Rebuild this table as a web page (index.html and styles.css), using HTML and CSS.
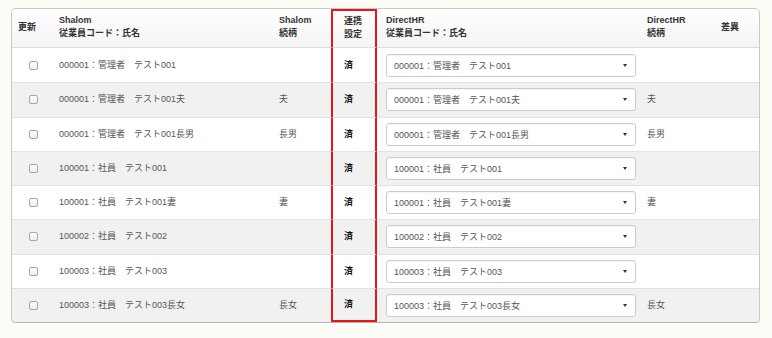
FILE: index.html
```html
<!DOCTYPE html>
<html lang="ja">

<head>
    <meta charset="UTF-8" />
    <meta name="viewport" content="width=device-width, initial-scale=1.0" />
    <title>従業員連携</title>
    <link rel="stylesheet" href="styles.css">
</head>

<body>
    <div class="panel">
        <table class="link-table">
            <thead>
                <tr>
                    <th class="col-check">更新</th>
                    <th class="col-name">Shalom<br>従業員コード：氏名</th>
                    <th class="col-rel">Shalom<br>続柄</th>
                    <th class="col-status">連携<br>設定</th>
                    <th class="col-select">DirectHR<br>従業員コード：氏名</th>
                    <th class="col-rel2">DirectHR<br>続柄</th>
                    <th class="col-diff">差異</th>
                </tr>
            </thead>
            <tbody>
                <tr>
                    <td class="col-check"><input type="checkbox"></td>
                    <td>000001：管理者　テスト001</td>
                    <td></td>
                    <td class="col-status">済</td>
                    <td class="col-select"><button class="picker"><span>000001：管理者　テスト001</span><span class="caret"></span></button></td>
                    <td></td>
                    <td></td>
                </tr>
                <tr>
                    <td class="col-check"><input type="checkbox"></td>
                    <td>000001：管理者　テスト001夫</td>
                    <td>夫</td>
                    <td class="col-status">済</td>
                    <td class="col-select"><button class="picker"><span>000001：管理者　テスト001夫</span><span class="caret"></span></button></td>
                    <td>夫</td>
                    <td></td>
                </tr>
                <tr>
                    <td class="col-check"><input type="checkbox"></td>
                    <td>000001：管理者　テスト001長男</td>
                    <td>長男</td>
                    <td class="col-status">済</td>
                    <td class="col-select"><button class="picker"><span>000001：管理者　テスト001長男</span><span class="caret"></span></button></td>
                    <td>長男</td>
                    <td></td>
                </tr>
                <tr>
                    <td class="col-check"><input type="checkbox"></td>
                    <td>100001：社員　テスト001</td>
                    <td></td>
                    <td class="col-status">済</td>
                    <td class="col-select"><button class="picker"><span>100001：社員　テスト001</span><span class="caret"></span></button></td>
                    <td></td>
                    <td></td>
                </tr>
                <tr>
                    <td class="col-check"><input type="checkbox"></td>
                    <td>100001：社員　テスト001妻</td>
                    <td>妻</td>
                    <td class="col-status">済</td>
                    <td class="col-select"><button class="picker"><span>100001：社員　テスト001妻</span><span class="caret"></span></button></td>
                    <td>妻</td>
                    <td></td>
                </tr>
                <tr>
                    <td class="col-check"><input type="checkbox"></td>
                    <td>100002：社員　テスト002</td>
                    <td></td>
                    <td class="col-status">済</td>
                    <td class="col-select"><button class="picker"><span>100002：社員　テスト002</span><span class="caret"></span></button></td>
                    <td></td>
                    <td></td>
                </tr>
                <tr>
                    <td class="col-check"><input type="checkbox"></td>
                    <td>100003：社員　テスト003</td>
                    <td></td>
                    <td class="col-status">済</td>
                    <td class="col-select"><button class="picker"><span>100003：社員　テスト003</span><span class="caret"></span></button></td>
                    <td></td>
                    <td></td>
                </tr>
                <tr>
                    <td class="col-check"><input type="checkbox"></td>
                    <td>100003：社員　テスト003長女</td>
                    <td>長女</td>
                    <td class="col-status">済</td>
                    <td class="col-select"><button class="picker"><span>100003：社員　テスト003長女</span><span class="caret"></span></button></td>
                    <td>長女</td>
                    <td></td>
                </tr>
            </tbody>
        </table>
    </div>
</body>

</html>
```

FILE: styles.css
```css
body {
    font-family: 'Liberation Sans', 'Noto Sans CJK JP', sans-serif;
    font-size: 9px;
    line-height: 13px;
    color: #555;
    margin: 0;
    padding: 8px 0 0 11px;
    background-color: #fbfdf6;
}

.panel {
    width: 749px;
    box-sizing: border-box;
    background: #ffffff;
    border: 1px solid #c9c9c9;
    border-bottom-color: #b0b0b0;
    border-radius: 5px;
    box-shadow: 0 1px 1px rgba(0, 0, 0, 0.12);
    overflow: hidden;
}

.link-table {
    width: 747px;
    border-collapse: separate;
    border-spacing: 0;
    table-layout: fixed;
}

.link-table th,
.link-table td {
    box-sizing: border-box;
    padding: 0 6px;
    text-align: left;
    vertical-align: middle;
}

.link-table th {
    height: 38px;
    padding-top: 4px;
    padding-bottom: 6px;
    color: #333;
    font-weight: bold;
    background: linear-gradient(to bottom, #ffffff 0%, #f4f4f4 100%);
    border-bottom: 1px solid #dddddd;
}

.link-table td {
    height: 34.25px;
    border-top: 1px solid #e2e2e2;
}

.link-table tbody tr:first-child td {
    border-top: none;
}

.link-table tbody tr:nth-child(even) td {
    background-color: #f1f1f1;
}

/* larguras das colunas */
.link-table th.col-check { width: 41px; }
.link-table th.col-name { width: 220px; }
.link-table th.col-rel { width: 58px; }
.link-table th.col-status { width: 46px; }
.link-table th.col-select { width: 264px; }
.link-table th.col-rel2 { width: 74px; }
.link-table th.col-diff { width: 44px; }

td.col-check {
    text-align: center;
    padding: 0 0 0 2px;
}

td.col-check input {
    appearance: none;
    -webkit-appearance: none;
    display: block;
    margin: 0 auto;
    width: 9px;
    height: 9px;
    border: 1px solid #a6a6a6;
    border-radius: 2px;
    background: linear-gradient(to bottom, #ffffff, #ededed);
}

/* coluna destacada em vermelho */
.link-table .col-status {
    padding-left: 11px;
    border-left: 2px solid #e8151b;
    border-right: 2px solid #e8151b;
}

.link-table th.col-status {
    border-top: 2px solid #e8151b;
}

.link-table tbody tr:last-child td.col-status {
    border-bottom: 2px solid #e8151b;
}

td.col-status {
    color: #111;
    font-weight: bold;
}

.link-table .col-select {
    padding-left: 9px;
    padding-right: 4px;
}

.picker {
    display: flex;
    justify-content: space-between;
    align-items: center;
    width: 250px;
    height: 23px;
    padding: 0 8px 0 7px;
    font-family: inherit;
    font-size: 9px;
    color: #555;
    background: #ffffff;
    border: 1px solid #cccccc;
    border-radius: 3px;
    box-shadow: inset 0 1px 1px rgba(0, 0, 0, 0.04);
}

.caret {
    width: 0;
    height: 0;
    border-top: 3px solid #333;
    border-left: 2.5px solid transparent;
    border-right: 2.5px solid transparent;
}
```
